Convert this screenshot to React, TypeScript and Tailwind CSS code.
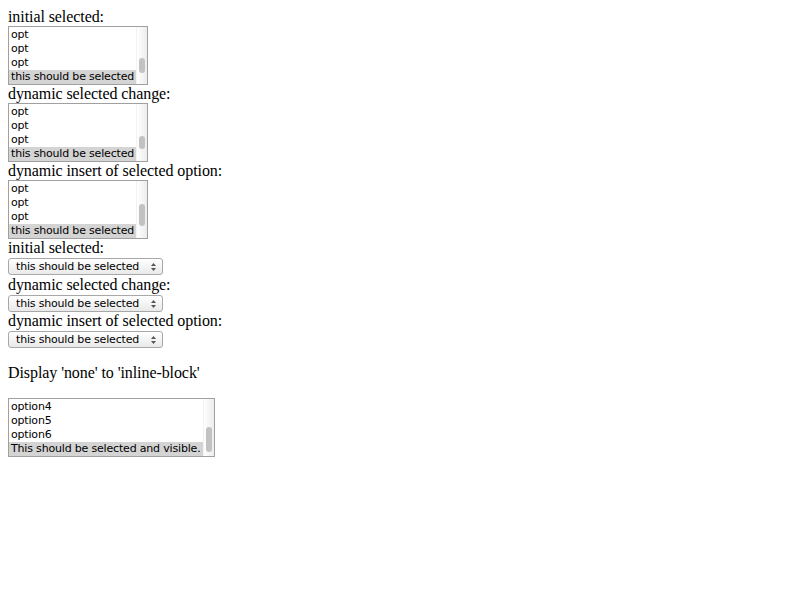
import React from 'react';

const opts = ['opt', 'opt', 'opt'];

function Scroll({ top, height }: { top: number; height: number }) {
  return (
    <div className="relative w-[11px] shrink-0 bg-gradient-to-r from-[#ffffff] to-[#ececec] border-l border-[#f2f2f2]">
      <div
        className="absolute left-[2px] w-[6px] rounded-[3px] bg-[#c2c2c2]"
        style={{ top, height }}
      />
    </div>
  );
}

function ListBox({
  items,
  selected,
  width,
  thumbTop,
  thumbHeight,
}: {
  items: string[];
  selected: string;
  width: string;
  thumbTop: number;
  thumbHeight: number;
}) {
  return (
    <div className={`flex h-[59px] border border-[#a0a0a0] bg-white ${width}`}>
      <div className="flex-1 flex flex-col pt-px font-['DejaVu_Sans',sans-serif] text-[11px] leading-[14px] tracking-[-0.18px]">
        {items.map((o, i) => (
          <div key={i} className="h-[14px] pl-[2px] whitespace-nowrap">
            {o}
          </div>
        ))}
        <div className="h-[14px] pl-[2px] bg-[#d4d4d4] whitespace-nowrap">{selected}</div>
      </div>
      <Scroll top={thumbTop} height={thumbHeight} />
    </div>
  );
}

function DropDown() {
  return (
    <div className="flex items-center justify-between w-[155px] h-[17px] rounded-[3px] border border-[#a8a8a8] bg-gradient-to-b from-[#ffffff] to-[#e9e9e9] pl-[7px] pr-[6px] font-['DejaVu_Sans',sans-serif] text-[11px] leading-[14px] tracking-[-0.18px]">
      <span className="whitespace-nowrap">this should be selected</span>
      <svg width="5" height="8" viewBox="0 0 5 8" className="shrink-0">
        <path d="M0 3 L2.5 0 L5 3 Z" fill="#555" />
        <path d="M0 5 L2.5 8 L5 5 Z" fill="#555" />
      </svg>
    </div>
  );
}

function Label({ children }: { children: React.ReactNode }) {
  return <div className="h-[18px] leading-[18px] whitespace-nowrap">{children}</div>;
}

export default function App() {
  return (
    <div className="min-h-[600px] bg-white p-2 text-black font-['Liberation_Serif',serif] text-[16px] tracking-[-0.08px]">
      <Label>initial selected:</Label>
      <ListBox items={opts} selected="this should be selected" width="w-[140px]" thumbTop={31} thumbHeight={15} />
      <Label>dynamic selected change:</Label>
      <ListBox items={opts} selected="this should be selected" width="w-[140px]" thumbTop={32} thumbHeight={13} />
      <Label>dynamic insert of selected option:</Label>
      <ListBox items={opts} selected="this should be selected" width="w-[140px]" thumbTop={23} thumbHeight={22} />

      <Label>initial selected:</Label>
      <div className="h-[19px] pt-px">
        <DropDown />
      </div>
      <Label>dynamic selected change:</Label>
      <div className="h-[18px] pt-px">
        <DropDown />
      </div>
      <Label>dynamic insert of selected option:</Label>
      <div className="h-[19px] pt-px">
        <DropDown />
      </div>

      <p className="mt-[15px] mb-4 h-[18px] leading-[18px]">Display 'none' to 'inline-block'</p>

      <ListBox
        items={['option4', 'option5', 'option6']}
        selected="This should be selected and visible."
        width="w-[207px]"
        thumbTop={28}
        thumbHeight={25}
      />
    </div>
  );
}
